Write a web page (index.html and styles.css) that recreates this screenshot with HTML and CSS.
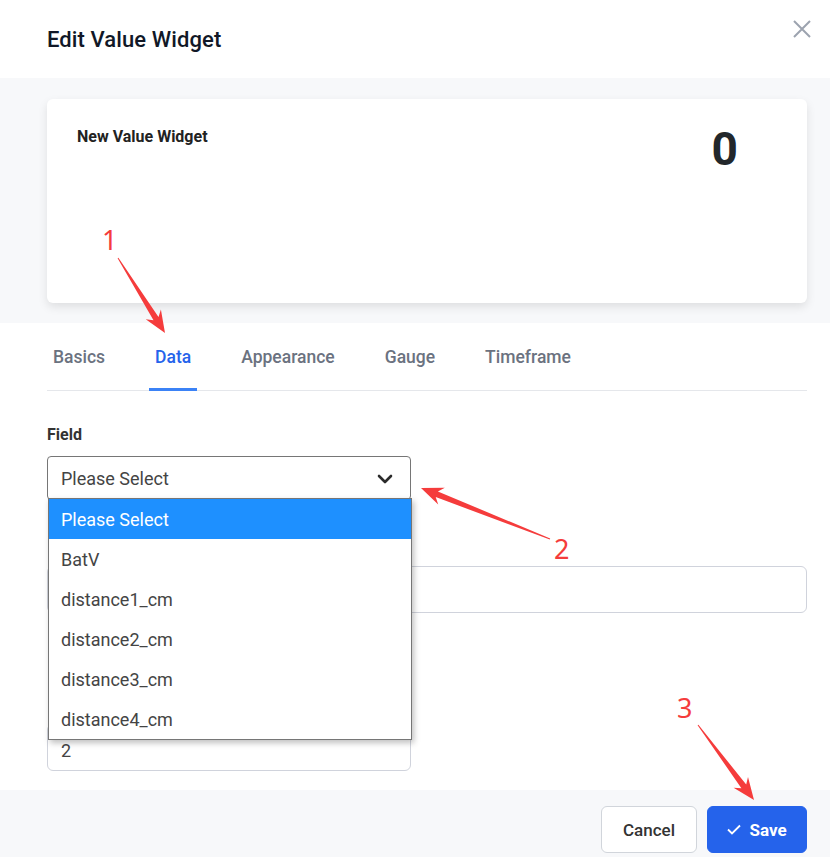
FILE: index.html
```html
<!DOCTYPE html>
<html>
<head>
<meta charset="utf-8">
<link rel="stylesheet" href="styles.css">
</head>
<body>
<div class="modal">
  <header class="modal-header">
    <h1 class="modal-title">Edit Value Widget</h1>
    <button class="close-btn" aria-label="Close">
      <svg width="18" height="18" viewBox="0 0 18 18"><path d="M1 1L17 17M17 1L1 17" stroke="#9ca3af" stroke-width="2" fill="none"/></svg>
    </button>
  </header>

  <section class="preview">
    <div class="widget-card">
      <div class="widget-name">New Value Widget</div>
      <div class="widget-value">0</div>
    </div>
  </section>

  <section class="content">
    <nav class="tabs">
      <div class="tab">Basics</div>
      <div class="tab active">Data</div>
      <div class="tab">Appearance</div>
      <div class="tab">Gauge</div>
      <div class="tab">Timeframe</div>
    </nav>

    <div class="field field-first">
      <label class="field-label">Field</label>
      <div class="select-wrap">
        <div class="select">
          <span>Please Select</span>
          <svg class="chevron" width="16" height="10" viewBox="0 0 16 10"><path d="M2 2L8 8L14 2" stroke="#2b2b2b" stroke-width="2.6" fill="none" stroke-linecap="round" stroke-linejoin="round"/></svg>
        </div>
        <ul class="dropdown">
          <li class="option selected">Please Select</li>
          <li class="option">BatV</li>
          <li class="option">distance1_cm</li>
          <li class="option">distance2_cm</li>
          <li class="option">distance3_cm</li>
          <li class="option">distance4_cm</li>
        </ul>
      </div>
    </div>

    <div class="field field-second">
      <div class="input"></div>
    </div>

    <div class="field field-third">
      <div class="input input-half">2</div>
    </div>
  </section>

  <footer class="modal-footer">
    <button class="btn btn-cancel">Cancel</button>
    <button class="btn btn-save">
      <svg width="14" height="11" viewBox="0 0 14 11"><path d="M1 5.5L5 9.5L13 1.5" stroke="#fff" stroke-width="1.8" fill="none"/></svg>
      <span>Save</span>
    </button>
  </footer>

  <svg class="annotations" width="830" height="857" viewBox="0 0 830 857">
    <g fill="#f53c3c">
      <polygon points="117.6,258.3 153.5,320.2 145.7,319.2 165,333 160.9,309.6 158.5,317.0 118.4,257.7"/>
      <polygon points="550.2,538.5 437.9,491.5 444.8,487.7 421,488 438.2,504.5 435.7,497.1 549.8,539.5"/>
      <polygon points="697.6,725.3 741.4,788.2 733.6,787.8 754,800 748.0,777.0 746.2,784.6 698.4,724.7"/>
    </g>
    <g class="anno-text" fill="#f53c3c">
      <text x="102" y="250">1</text>
      <text x="554" y="559">2</text>
      <text x="677" y="718">3</text>
    </g>
  </svg>
</div>
</body>
</html>
```

FILE: styles.css
```css
* { box-sizing: border-box; }

html, body {
  margin: 0;
  padding: 0;
  background: #ffffff;
  overflow: hidden;
}

body {
  font-family: Roboto, "Liberation Sans", sans-serif;
  color: #333333;
}

.modal {
  position: relative;
  width: 830px;
  height: 857px;
  display: flex;
  flex-direction: column;
}

.modal-header {
  height: 78px;
  display: flex;
  align-items: center;
  justify-content: space-between;
  padding: 0 19px 0 47px;
}

.modal-title {
  margin: 0;
  font-size: 22px;
  font-weight: 500;
  color: #111827;
  letter-spacing: 0.1px;
}

.close-btn {
  border: none;
  background: none;
  padding: 0;
  margin-top: -20px;
  width: 18px;
  height: 18px;
  display: flex;
}

.preview {
  background: #f7f8fa;
  padding: 21px 23px 20px 47px;
}

.widget-card {
  height: 204px;
  background: #ffffff;
  border-radius: 6px;
  box-shadow: 0 4px 10px rgba(0, 0, 0, 0.10);
  display: flex;
  justify-content: space-between;
  align-items: flex-start;
  padding: 28px 69px 0 30px;
}

.widget-name {
  font-size: 16px;
  font-weight: 700;
  color: #222222;
  margin-top: 0px;
}

.widget-value {
  font-size: 46px;
  font-weight: 700;
  color: #22272b;
  line-height: 1;
  margin-top: -1px;
}

.content {
  flex: 1;
  padding: 0 23px 0 47px;
}

.tabs {
  display: flex;
  gap: 38px;
  height: 68px;
  border-bottom: 1px solid #e5e7eb;
}

.tab {
  padding: 0 6px;
  display: flex;
  align-items: center;
  font-size: 17.5px;
  font-weight: 500;
  color: #6b7280;
  margin-bottom: -1px;
  border-bottom: 3px solid transparent;
  padding-top: 3px;
}

.tab.active {
  color: #2563eb;
  border-bottom-color: #3b82f6;
}

.field-label {
  display: block;
  font-size: 16px;
  line-height: 20px;
  font-weight: 700;
  color: #333333;
}

.field-first { margin-top: 34px; }
.field-first .field-label { margin-bottom: 11px; }

.select-wrap {
  position: relative;
  width: 364px;
}

.select {
  height: 44px;
  border: 1px solid #767676;
  border-radius: 4px;
  display: flex;
  align-items: center;
  justify-content: space-between;
  padding: 0 17px 0 13px;
  font-size: 18px;
  color: #444444;
}

.chevron { margin-top: 1px; }

.dropdown {
  position: absolute;
  top: 42px;
  left: 1px;
  width: 364px;
  margin: 0;
  padding: 0;
  list-style: none;
  background: #ffffff;
  border: 1px solid #767676;
  box-shadow: 2px 3px 6px rgba(0, 0, 0, 0.25);
  z-index: 5;
}

.option {
  height: 40px;
  display: flex;
  align-items: center;
  padding: 0 12px;
  font-size: 18px;
  color: #444444;
}

.option.selected {
  background: #1e90ff;
  color: #ffffff;
}

.field-second { margin-top: 66px; }

.input {
  height: 47px;
  border: 1px solid #d0d3dc;
  border-radius: 6px;
  display: flex;
  align-items: center;
  padding: 0 13px;
  font-size: 18px;
  color: #444444;
  padding-top: 6px;
}

.field-third { margin-top: 111px; }

.input-half { width: 364px; }

.modal-footer {
  height: 67px;
  background: #f7f8fa;
  display: flex;
  justify-content: flex-end;
  align-items: flex-start;
  gap: 10px;
  padding: 16px 23px 0 0;
}

.btn {
  height: 47px;
  border-radius: 6px;
  font-family: Roboto, "Liberation Sans", sans-serif;
  font-size: 17px;
  display: flex;
  align-items: center;
  justify-content: center;
  gap: 8px;
  padding: 0;
}

.btn-cancel {
  width: 96px;
  background: #ffffff;
  border: 1px solid #d1d5db;
  color: #333333;
  font-weight: 500;
}

.btn-save {
  width: 100px;
  background: #2563eb;
  border: 1px solid #2563eb;
  color: #ffffff;
  font-weight: 700;
}

.annotations {
  position: absolute;
  top: 0;
  left: 0;
  pointer-events: none;
  z-index: 10;
}

.anno-text {
  font-family: "Noto Sans", "DejaVu Sans", sans-serif;
  font-size: 27px;
}
```
